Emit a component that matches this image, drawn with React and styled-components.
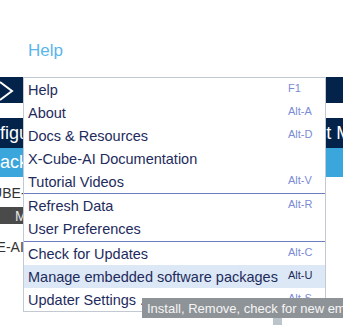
import React from "react";
import styled, { createGlobalStyle } from "styled-components";

const Global = createGlobalStyle`
  html, body { margin: 0; padding: 0; background: #ffffff; }
  body { font-family: "Liberation Sans", Arial, sans-serif; }
`;

const Page = styled.div`
  position: relative;
  width: 343px;
  height: 325px;
  overflow: hidden;
  background: #ffffff;
`;

const Header = styled.div`
  height: 77px;
  box-sizing: border-box;
  padding: 41px 0 0 28px;
`;

const MenuTitle = styled.span`
  font-size: 17px;
  color: #5ab5e9;
`;

const NavBar = styled.div`
  height: 26px;
  background: #03234b;
  display: flex;
  align-items: center;
`;

const TabBar = styled.div`
  margin-top: 15px;
  height: 30px;
  background: #03234b;
  display: flex;
  align-items: center;
  gap: 22px;
  white-space: nowrap;
  overflow: hidden;
`;

const Tab = styled.span`
  flex-shrink: 0;
  color: #ffffff;
  font-size: 18px;
  margin-left: ${(p) => p.$offset || 0}px;
`;

const SubBar = styled.div`
  height: 29px;
  background: #3ba6dc;
  display: flex;
  align-items: center;
  white-space: nowrap;
  overflow: hidden;
`;

const SubLabel = styled.span`
  color: #ffffff;
  font-size: 18px;
  margin-left: -12px;
`;

const Content = styled.div`
  display: flex;
  flex-direction: column;
  align-items: flex-start;
  white-space: nowrap;
  overflow: hidden;
`;

const InfoLine = styled.div`
  height: 22px;
  display: flex;
  align-items: center;
  font-size: 14px;
  color: #333333;
  margin-top: ${(p) => p.$top || 0}px;
`;

const InfoText = styled.span`
  margin-left: ${(p) => p.$indent || 0}px;
`;

const GrayBar = styled.div`
  margin-top: 3px;
  width: 120px;
  height: 17px;
  background: #4a4a4a;
  display: flex;
  align-items: center;
  padding-left: 15px;
  box-sizing: border-box;
  font-size: 14px;
  color: #e6e6e6;
`;

const Menu = styled.div`
  position: absolute;
  left: 23px;
  top: 77px;
  width: 303px;
  box-sizing: border-box;
  background: #ffffff;
  border: 1px solid #c3c9d0;
  display: flex;
  flex-direction: column;
`;

const Item = styled.div`
  height: 23px;
  display: flex;
  align-items: center;
  justify-content: space-between;
  padding: 0 0 0 4px;
  background: ${(p) => (p.$active ? "#dce8f5" : "transparent")};
  white-space: nowrap;
`;

const Label = styled.span`
  font-size: 14.5px;
  color: #1e2b5c;
`;

const Shortcut = styled.span`
  width: 37px;
  font-size: 11px;
  color: ${(p) => (p.$active ? "#1e2b5c" : "#7b8bd6")};
  margin-top: -3px;
`;

const Separator = styled.div`
  height: 1px;
  background: #6c7ec0;
  margin: ${(p) => p.$m || "0"};
`;

const Tooltip = styled.div`
  position: absolute;
  left: 142px;
  top: 298px;
  height: 20px;
  padding: 0 6px 0 5px;
  background: #8e9398;
  color: #f5f5f5;
  font-size: 13px;
  display: flex;
  align-items: center;
  white-space: nowrap;
`;

const Pointer = styled.div`
  position: absolute;
  left: 273px;
  top: 318px;
  width: 9px;
  height: 7px;
  background: #bcc4cc;
`;

const groups = [
  [
    ["Help", "F1"],
    ["About", "Alt-A"],
    ["Docs & Resources", "Alt-D"],
    ["X-Cube-AI Documentation", ""],
    ["Tutorial Videos", "Alt-V"],
  ],
  [
    ["Refresh Data", "Alt-R"],
    ["User Preferences", ""],
  ],
  [
    ["Check for Updates", "Alt-C"],
    ["Manage embedded software packages", "Alt-U", true],
    ["Updater Settings ...", "Alt-S"],
  ],
];

export default function App() {
  return (
    <>
      <Global />
      <Page>
        <Header>
          <MenuTitle>Help</MenuTitle>
        </Header>
        <NavBar>
          <svg width="16" height="26" viewBox="0 0 16 26">
            <polyline
              points="0,5 12,14 0,23"
              fill="none"
              stroke="#ffffff"
              strokeWidth="2"
            />
          </svg>
        </NavBar>
        <TabBar>
          <Tab $offset={-33}>Configuration</Tab>
          <Tab>Clock Configuration</Tab>
          <Tab>Project Manager</Tab>
        </TabBar>
        <SubBar>
          <SubLabel>Back</SubLabel>
        </SubBar>
        <Content>
          <InfoLine $top={5}>
            <InfoText $indent={-32}>X-CUBE-AI</InfoText>
          </InfoLine>
          <GrayBar>Manage</GrayBar>
          <InfoLine $top={12}>
            <InfoText $indent={-47}>X-CUBE-AI</InfoText>
          </InfoLine>
        </Content>
        <Menu>
          {groups.map((g, gi) => (
            <React.Fragment key={gi}>
              {gi > 0 && <Separator $m={gi === 2 ? "1px 0 0" : "0"} />}
              {g.map(([label, sc, active]) => (
                <Item key={label} $active={active}>
                  <Label>{label}</Label>
                  <Shortcut $active={active}>{sc}</Shortcut>
                </Item>
              ))}
            </React.Fragment>
          ))}
        </Menu>
        <Tooltip>Install, Remove, check for new embedded software packages</Tooltip>
        <Pointer />
      </Page>
    </>
  );
}
